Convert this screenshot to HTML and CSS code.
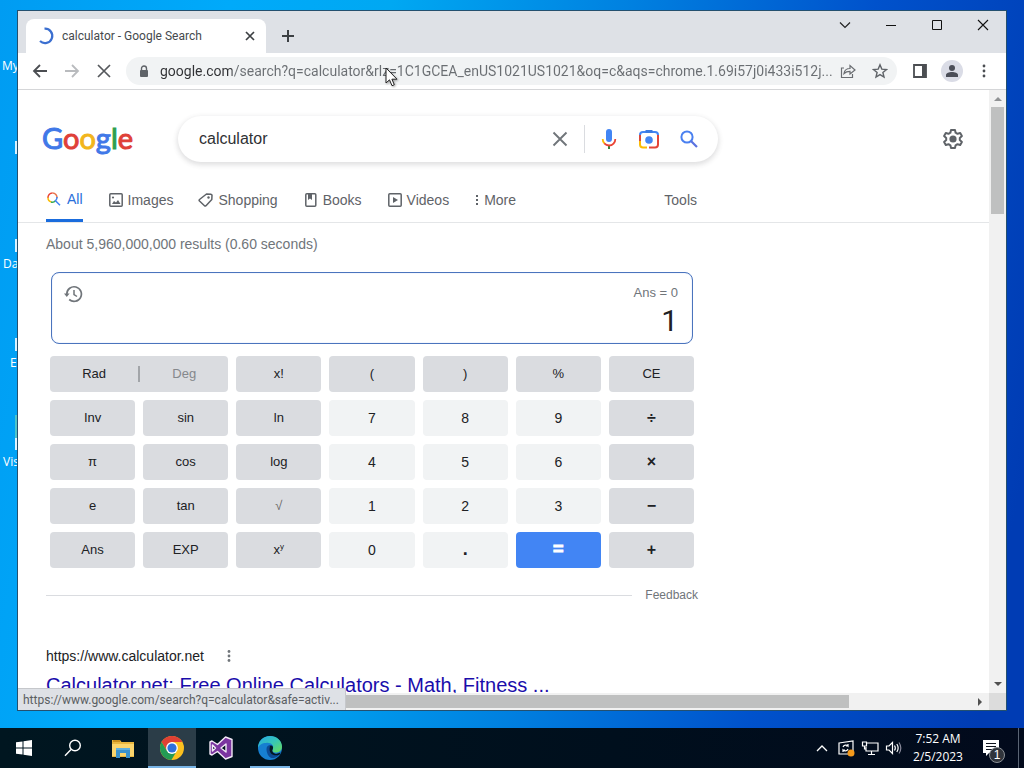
FILE: index.html
```html
<!DOCTYPE html>
<html lang="en">
<head>
<meta charset="utf-8">
<meta name="viewport" content="width=device-width, initial-scale=1">
<title>calculator - Google Search</title>
<link rel="stylesheet" href="styles.css">
</head>
<body>
<div class="desktop">
  <div class="workspace">
    <div class="shortcut shortcut-my"><span class="shortcut-label">My</span></div>
    <div class="shortcut shortcut-plain"><span class="sliver"></span></div>
    <div class="shortcut shortcut-da"><span class="sliver"></span><span class="shortcut-label">Da</span></div>
    <div class="shortcut shortcut-e"><span class="sliver"></span><span class="shortcut-label">E</span></div>
    <div class="shortcut shortcut-vis"><span class="sliver tall"></span><span class="shortcut-label">Vis</span></div>

    <main class="window">
      <header class="tab-strip">
        <div class="tab">
          <svg class="spinner" width="18" height="18" viewBox="0 0 18 18"><path d="M7.500 1.700A7.200 7.200 0 1 1 3 14" fill="none" stroke="#3b6fd0" stroke-width="2.200"/></svg>
          <span class="tab-title">calculator - Google Search</span>
          <button class="icon-button tab-close" aria-label="Close tab"><svg width="10" height="10" viewBox="0 0 10 10"><path d="M1 1l8 8M9 1L1 9" stroke="#3c4043" stroke-width="1.700"/></svg></button>
        </div>
        <button class="icon-button new-tab" aria-label="New tab"><svg width="14" height="14" viewBox="0 0 14 14"><path d="M7 1v12M1 7h12" stroke="#3c4043" stroke-width="2"/></svg></button>
        <div class="window-controls">
          <button class="icon-button" aria-label="Search tabs"><svg width="12" height="12" viewBox="0 0 12 12"><path d="M1 3.500l5 5 5-5" fill="none" stroke="#222" stroke-width="1.200"/></svg></button>
          <button class="icon-button" aria-label="Minimize"><svg width="12" height="12" viewBox="0 0 12 12"><path d="M1 6.500h10" stroke="#111"/></svg></button>
          <button class="icon-button" aria-label="Maximize"><svg width="12" height="12" viewBox="0 0 12 12"><path d="M1.500 1.500h9v9h-9z" fill="none" stroke="#111"/></svg></button>
          <button class="icon-button" aria-label="Close"><svg width="12" height="12" viewBox="0 0 12 12"><path d="M1 1l10 10M11 1L1 11" stroke="#111" stroke-width="1.100"/></svg></button>
        </div>
      </header>

      <nav class="toolbar">
        <button class="icon-button nav-button" aria-label="Back"><svg width="16" height="16" viewBox="0 0 16 16"><path d="M15 8H2M8 2L2 8l6 6" fill="none" stroke="#4b4e52" stroke-width="1.800"/></svg></button>
        <button class="icon-button nav-button" aria-label="Forward"><svg width="16" height="16" viewBox="0 0 16 16"><path d="M1 8h13M8 2l6 6-6 6" fill="none" stroke="#b9bbbe" stroke-width="1.800"/></svg></button>
        <button class="icon-button nav-button" aria-label="Stop"><svg width="14" height="14" viewBox="0 0 14 14"><path d="M1 1l12 12M13 1L1 13" stroke="#55585c" stroke-width="1.700"/></svg></button>
        <div class="omnibox">
          <svg class="lock" width="10" height="13" viewBox="0 0 10 13"><path d="M2.500 6V3.500a2.500 2.500 0 0 1 5 0V6" fill="none" stroke="#5f6368" stroke-width="1.400"/><rect x="1" y="5" width="8" height="7" rx="1" fill="#5f6368"/></svg>
          <input class="address" type="text" aria-label="Address" value="google.com/search?q=calculator&amp;rlz=1C1GCEA_enUS1021US1021&amp;oq=c&amp;aqs=chrome.1.69i57j0i433i512j...">
          <button class="icon-button" aria-label="Share"><svg width="16" height="16" viewBox="0 0 16 16"><path d="M4 5H1.500v9.500h11V11M4 10.500c.5-3.500 2.500-5 6-5V2.500l5 4.500-5 4V8.300c-3 0-4.500.7-6 2.200z" fill="none" stroke="#6a6d71" stroke-width="1.200"/></svg></button>
          <button class="icon-button bookmark" aria-label="Bookmark"><svg width="16" height="16" viewBox="0 0 16 16"><path d="M8 1.800l1.800 4.300 4.700.4-3.600 3 1.100 4.600L8 11.600l-4 2.500 1.100-4.600-3.600-3 4.700-.4z" fill="none" stroke="#5f6368" stroke-width="1.400"/></svg></button>
        </div>
        <div class="toolbar-actions">
          <button class="icon-button" aria-label="Side panel"><svg width="14" height="14" viewBox="0 0 14 14"><path d="M1 1h12v12H1z" fill="none" stroke="#4b4e52" stroke-width="1.800"/><path d="M9 1h4v12H9z" fill="#4b4e52"/></svg></button>
          <button class="icon-button avatar" aria-label="Profile"><svg width="14" height="14" viewBox="0 0 14 14" fill="#4b4e58"><circle cx="7" cy="4" r="3"/><path d="M1 13v-2c0-2 3-3 6-3s6 1 6 3v2z"/></svg></button>
          <button class="icon-button menu" aria-label="Menu"><svg width="4" height="14" viewBox="0 0 4 14" fill="#4b4e52"><circle cx="2" cy="2" r="1.400"/><circle cx="2" cy="7" r="1.400"/><circle cx="2" cy="12" r="1.400"/></svg></button>
        </div>
      </nav>

      <div class="viewport">
        <div class="page">
          <div class="search-row">
            <a class="logo" href="#" aria-label="Google"><span class="blue">G</span><span class="red">o</span><span class="yellow">o</span><span class="blue">g</span><span class="green">l</span><span class="red">e</span></a>
            <form class="search-box">
              <input class="query" type="text" aria-label="Search" value="calculator">
              <button class="icon-button clear" type="button" aria-label="Clear"><svg width="16" height="16" viewBox="0 0 16 16"><path d="M1.500 1.500l13 13M14.500 1.500l-13 13" stroke="#70757a" stroke-width="1.900"/></svg></button>
              <button class="icon-button tool" type="button" aria-label="Search by voice"><svg width="24" height="24" viewBox="0 0 24 24"><rect x="9" y="2" width="6" height="13" rx="3" fill="#4285f4"/><path d="M11 18.500h2V22h-2z" fill="#34853f"/><path d="M12 18.500a6.300 6.300 0 0 0 6.300-6.500" fill="none" stroke="#ea4335" stroke-width="1.800"/><path d="M5.700 12a6 6 0 0 0 2 4.700" fill="none" stroke="#fbbc04" stroke-width="1.800"/><path d="M7.300 16.300a7 7 0 0 0 4.700 2.200" fill="none" stroke="#ea4335" stroke-width="1.800"/></svg></button>
              <button class="icon-button tool" type="button" aria-label="Search by image"><svg width="24" height="24" viewBox="0 0 24 24" fill="none" stroke-width="2"><path d="M3 10V8a3 3 0 0 1 3-3h12a3 3 0 0 1 3 3" stroke="#4285f4"/><path d="M8.500 4.500h7" stroke="#3c7ae0" stroke-width="3"/><path d="M21 8v9.500a3 3 0 0 1-3 3h-6" stroke="#e34538"/><path d="M3 8v6" stroke="#d94a3c"/><path d="M3 14v3.500a3 3 0 0 0 3 3h4" stroke="#fbbc04"/><circle cx="12" cy="13" r="3.800" fill="#4285f4"/></svg></button>
              <button class="icon-button tool" aria-label="Search"><svg width="18" height="18" viewBox="0 0 18 18"><circle cx="7" cy="7" r="5.600" fill="none" stroke="#4a80f0" stroke-width="2"/><path d="M11 11l6 6" stroke="#5a72e0" stroke-width="2.200"/></svg></button>
            </form>
            <button class="icon-button settings" aria-label="Settings"><svg width="24" height="24" viewBox="0 0 24 24"><path d="M10 3h4l.6 2.700 1.900 1.100 2.700-.8 1.700 3-2.100 1.900v2.200l2.100 1.900-1.700 3-2.700-.8-1.900 1.100L14 21h-4l-.6-2.700-1.900-1.100-2.700.8-1.700-3 2.100-1.900v-2.200L3.100 9l1.700-3 2.700.8 1.900-1.100z" fill="none" stroke="#5f6368" stroke-width="2" stroke-linejoin="round"/><circle cx="12" cy="12" r="3.600" fill="#5f6368"/></svg></button>
          </div>

          <nav class="filters">
            <a class="filter active" href="#"><svg width="16" height="16" viewBox="0 0 16 16" fill="none" stroke-width="1.500"><path d="M2 7a4.500 4.500 0 0 1 4.500-5" stroke="#ea4335"/><path d="M6.500 2A4.500 4.500 0 0 1 11 7" stroke="#e8734a"/><path d="M2 6.500A4.500 4.500 0 0 0 5.500 11" stroke="#fbbc04"/><path d="M5 11a4.500 4.500 0 0 0 4.500-1.200" stroke="#34a853"/><path d="M11 6a4.500 4.500 0 0 1-1.500 3.800L14 14.200" stroke="#4285f4"/></svg>All</a>
            <a class="filter" href="#"><svg width="16" height="16" viewBox="0 0 16 16"><rect x="1.800" y="1.800" width="12.400" height="12.400" rx="1" fill="none" stroke="#5f6368" stroke-width="1.500"/><path d="M4 12l2-3 2 1.500L10 8l2.500 4z" fill="#5f6368"/><circle cx="5" cy="5.500" r="1.100" fill="#5f6368"/></svg>Images</a>
            <a class="filter" href="#"><svg width="16" height="16" viewBox="0 0 16 16"><path d="M8.500 2l4.500.2 1 .9-.2 4.400L8 13.700c-.6.500-1 .5-1.500 0L1.500 9c-.5-.5-.5-1 0-1.500z" fill="none" stroke="#5f6368" stroke-width="1.500" stroke-linejoin="round"/><circle cx="10.500" cy="5.500" r="1.200" fill="#5f6368"/></svg>Shopping</a>
            <a class="filter" href="#"><svg width="16" height="16" viewBox="0 0 16 16"><rect x="2.800" y="1.800" width="10" height="12.400" rx="1" fill="none" stroke="#5f6368" stroke-width="1.500"/><path d="M5 2h4v6L7 6.500 5 8z" fill="#5f6368"/></svg>Books</a>
            <a class="filter" href="#"><svg width="16" height="16" viewBox="0 0 16 16"><rect x="1.800" y="1.800" width="12.400" height="12.400" rx="1" fill="none" stroke="#5f6368" stroke-width="1.500"/><path d="M6 5l5 3-5 3z" fill="#5f6368"/></svg>Videos</a>
            <a class="filter" href="#"><svg width="6" height="12" viewBox="0 0 6 12" fill="#5f6368"><path d="M2 1h2v2H2zM2 5h2v2H2zM2 9h2v2H2z"/></svg>More</a>
            <a class="filter tools" href="#">Tools</a>
          </nav>

          <section class="results">
            <p class="stats">About 5,960,000,000 results (0.60 seconds)</p>
            <div class="calculator">
              <div class="display">
                <button class="icon-button history" aria-label="History"><svg width="20" height="20" viewBox="0 0 20 20" fill="none" stroke="#70757a" stroke-width="1.700"><path d="M3.800 10a7.300 7.300 0 1 1 2.400 5.500"/><path d="M1 9.500h5.600L3.800 13z" fill="#70757a" stroke="none"/><path d="M11 6v4.500l3 2" stroke-width="1.500"/></svg></button>
                <div class="readout"><span class="previous">Ans = 0</span><output class="value">1</output></div>
              </div>
              <div class="keys">
                <div class="angle-mode"><button class="mode">Rad</button><span class="mode-divider"></span><button class="mode muted">Deg</button></div>
                <button class="key">x!</button><button class="key">(</button><button class="key">)</button><button class="key">%</button><button class="key">CE</button>
                <button class="key">Inv</button><button class="key">sin</button><button class="key">ln</button><button class="key digit">7</button><button class="key digit">8</button><button class="key digit">9</button><button class="key operator">÷</button>
                <button class="key">π</button><button class="key">cos</button><button class="key">log</button><button class="key digit">4</button><button class="key digit">5</button><button class="key digit">6</button><button class="key operator">×</button>
                <button class="key">e</button><button class="key">tan</button><button class="key root">√</button><button class="key digit">1</button><button class="key digit">2</button><button class="key digit">3</button><button class="key operator">−</button>
                <button class="key">Ans</button><button class="key">EXP</button><button class="key"><span>x<sup>y</sup></span></button><button class="key digit">0</button><button class="key digit point">.</button><button class="key equals">=</button><button class="key operator">+</button>
              </div>
            </div>
            <div class="feedback"><span class="rule"></span><a class="feedback-link" href="#">Feedback</a></div>
            <article class="result">
              <div class="source"><cite class="site">https://www.calculator.net</cite><button class="icon-button" aria-label="About this result"><svg width="4" height="14" viewBox="0 0 4 14" fill="#70757a"><circle cx="2" cy="2.500" r="1.400"/><circle cx="2" cy="7" r="1.400"/><circle cx="2" cy="11.500" r="1.400"/></svg></button></div>
              <h3 class="title"><a href="#">Calculator.net: Free Online Calculators - Math, Fitness ...</a></h3>
            </article>
          </section>
        </div>
        <div class="scroll-y"><svg width="8" height="4" viewBox="0 0 8 4"><path d="M0 4l4-4 4 4z" fill="#909294"/></svg><span class="thumb-y"></span><svg width="8" height="4" viewBox="0 0 8 4"><path d="M0 0l4 4 4-4z" fill="#505050"/></svg></div>
        <div class="scroll-x"><span class="thumb-x"></span><svg width="4" height="8" viewBox="0 0 4 8"><path d="M0 0l4 4-4 4z" fill="#505050"/></svg></div>
        <div class="corner"></div>
        <div class="status">https://www.google.com/search?q=calculator&amp;safe=activ...</div>
      </div>
    </main>
    <svg class="pointer" width="14" height="21" viewBox="0 0 14 21"><path d="M1 1v15l3.500-3.200L7 18.700l2.300-1-2.400-5.500H12z" fill="#fff" stroke="#222" stroke-linejoin="round"/></svg>
  </div>

  <footer class="taskbar">
    <button class="task" aria-label="Start"><svg width="16" height="16" viewBox="0 0 16 16" fill="#fff"><path d="M0 2.300l6.500-.9v6.100H0zM7.500 1.200L16 0v7.500H7.500zM0 8.500h6.500v6.100L0 13.700zM7.500 8.500H16V16l-8.500-1.200z"/></svg></button>
    <button class="task search-task" aria-label="Search"><svg width="18" height="18" viewBox="0 0 18 18" fill="none" stroke="#fff" stroke-width="1.400"><circle cx="11" cy="6.500" r="5.300"/><path d="M7 10.500L1 16.800"/></svg></button>
    <button class="task" aria-label="File Explorer"><svg width="22" height="20" viewBox="0 0 22 20"><path d="M0 2h8l1.500 2H22v15H0z" fill="#e9b73f"/><path d="M1 2h7v2H1z" fill="#c98f1d"/><path d="M0 6h22v12H0z" fill="#fbd56c"/><path d="M4 10h14v10h-4v-5H8v5H4z" fill="#3b92cc"/><path d="M4 10h14v2H4z" fill="#5fb0e0"/></svg></button>
    <button class="task current" aria-label="Google Chrome"><svg width="24" height="24" viewBox="0 0 24 24"><circle cx="12" cy="12" r="12" fill="#fbc01f"/><path d="M1.600 6A12 12 0 0 1 22.400 6H12L7 15z" fill="#df4034"/><path d="M1.600 6a12 12 0 0 0 9.800 18l5.500-9.200L7 15z" fill="#239b54"/><circle cx="12" cy="12" r="5.900" fill="#fff"/><circle cx="12" cy="12" r="4.600" fill="#2d70dd"/></svg></button>
    <button class="task" aria-label="Visual Studio"><svg width="24" height="24" viewBox="0 0 24 24"><path d="M16.500 1L23 3.500v17L16.500 23l-8-7.500L3 19l-2-1V6l2-1 5.500 3.500zM3.500 9v6L6.500 12zM17 8l-5 4 5 4z" fill="#7b35a0" fill-rule="evenodd" stroke="#f3eaf7" stroke-width="1.400" stroke-linejoin="round"/></svg></button>
    <button class="task running" aria-label="Microsoft Edge"><svg width="24" height="24" viewBox="0 0 24 24"><defs><linearGradient id="edge-top" x1="0" y1="0" x2="1" y2="1"><stop offset="0" stop-color="#26a8e6"/><stop offset=".5" stop-color="#36c5b8"/><stop offset="1" stop-color="#6bdc55"/></linearGradient></defs><circle cx="12" cy="12" r="12" fill="#167fd1"/><path d="M0 12C0 5 5 0 12 0s12 5 12 10.500c0 4-3 6-6.500 6-3 0-4-1.500-3-3C17 9 12 6 8 7c-4 0-7 2-8 5z" fill="url(#edge-top)"/><path d="M8.500 13c0-3 2-4 4-4 3 0 3 3 2 4.500-1 2 1 4 4 4 2 0 3-.5 4-1-2 4.500-6 6-9 5.500-3-1-5-5-5-9z" fill="#0c4a94"/><path d="M12 10c2-1 4 1 2.500 3.500-1 2 1 4.500 4 4.500l4-1.500-.8 2c-4 2-12 1-9.700-8.500z" fill="#031722"/></svg></button>
    <div class="tray">
      <button class="tray-button" aria-label="Show hidden icons"><svg width="12" height="8" viewBox="0 0 12 8"><path d="M1 7l5-5 5 5" fill="none" stroke="#fff" stroke-width="1.300"/></svg></button>
      <button class="tray-button" aria-label="Update"><svg width="18" height="18" viewBox="0 0 18 18" fill="none" stroke="#fff" stroke-width="1.200"><path d="M2 4l14-2v13H2z"/><path d="M6 8a3 3 0 0 1 5-1V5M11 7H9M11 10a3 3 0 0 1-5 1v2M6 11h2"/><circle cx="14" cy="14" r="3.500" fill="#f59a1b" stroke="none"/></svg></button>
      <button class="tray-button" aria-label="Network"><svg width="18" height="16" viewBox="0 0 18 16" fill="none" stroke="#fff" stroke-width="1.200"><path d="M6 3h11v8H5V7M10.500 11v3.500M7 14.500h7M1.500 2h4v4h-4zM3.500 6v3H5"/></svg></button>
      <button class="tray-button" aria-label="Volume"><svg width="18" height="16" viewBox="0 0 18 16" fill="none" stroke="#fff" stroke-width="1.200"><path d="M1.500 6v4H4l3.500 3.500v-11L4 6z"/><path d="M9.500 5.500c1 1.500 1 3.500 0 5M11.800 4c1.700 2.500 1.700 5.500 0 8"/><path d="M14 2.500c2.300 3.500 2.300 7.500 0 11" stroke="#889"/></svg></button>
      <time class="clock" datetime="2023-02-05T07:52"><span>7:52 AM</span><span>2/5/2023</span></time>
      <button class="notifications" aria-label="Notifications"><svg width="18" height="18" viewBox="0 0 18 18"><path d="M1 1h16v13H7l-3 3v-3H1z" fill="#fff"/><path d="M4 4.500h10M4 7.500h10M4 10.500h6" stroke="#10151f" stroke-width="1.200"/></svg><span class="badge">1</span></button>
      <span class="show-desktop"></span>
    </div>
  </footer>
</div>
</body>
</html>
```
FILE: styles.css
```css
* { box-sizing: border-box; }
body { margin: 0; font-family: "Liberation Sans", Arial, sans-serif; color: #202124; }
svg { display: block; flex: none; }
button { font: inherit; color: inherit; border: 0; padding: 0; margin: 0; background: none; }
input { font: inherit; border: 0; padding: 0; outline: 0; background: none; min-width: 0; }
a { color: inherit; text-decoration: none; }
.icon-button { display: flex; align-items: center; justify-content: center; flex: none; }

.desktop { display: flex; flex-direction: column; height: 100vh; overflow: hidden; }
.workspace { position: relative; flex: 1; min-height: 0; background: linear-gradient(100deg, #009cf2 0%, #00aafa 20%, #00a8f2 34%, #0080e0 55%, #0052cc 76%, #003cb4 96%); }

/* Desktop shortcuts, mostly covered by the browser window */
.shortcut { position: absolute; left: 0; width: 28px; display: flex; flex-direction: column; gap: 4px; color: #fff; font: 12px/16px "Open Sans", sans-serif; }
.shortcut-my { top: 58px; left: -1px; }
.shortcut-plain { top: 141px; }
.shortcut-da { top: 239px; }
.shortcut-e { top: 338px; }
.shortcut-vis { top: 415px; }
.sliver { width: 3px; height: 13px; margin-left: 15px; background: #d8f2ff; }
.sliver.tall { height: 35px; background: linear-gradient(#4fc4c8 65%, #e0f4ff 65%); }
.shortcut-label { padding-left: 3px; }
.shortcut-e .shortcut-label { padding-left: 10px; }

.window { position: absolute; inset: 10px 17px 17px; display: flex; flex-direction: column; border: 1px solid #24506f; background: #fff; }

.tab-strip { display: flex; align-items: flex-end; height: 42px; padding-left: 8px; background: #dee1e6; flex: none; }
.tab { display: flex; align-items: center; width: 240px; height: 34px; padding: 0 10px 0 11px; gap: 7px; background: #fff; border-radius: 8px 8px 0 0; }
.tab-title { flex: 1; font: 12px/18px Roboto, sans-serif; color: #45494d; white-space: nowrap; }
.tab-close { width: 12px; height: 16px; }
.new-tab { width: 28px; height: 34px; margin-left: 8px; }
.window-controls { display: flex; align-self: flex-start; margin-left: auto; }
.window-controls .icon-button { width: 46px; height: 28px; }

.toolbar { display: flex; align-items: center; height: 37px; padding: 0 15px 0 6px; border-bottom: 1px solid #d5d6d8; flex: none; }
.nav-button { width: 32px; height: 28px; }
.omnibox { display: flex; align-items: center; flex: 1; min-width: 0; height: 28px; margin-left: 6px; padding: 0 9px 0 13px; border-radius: 14px; background: #f1f3f4; gap: 8px; }
.lock { margin-right: 3px; }
.bookmark { margin-left: 8px; }
.address { flex: 1; font: 14px/20px Roboto, sans-serif; color: transparent; background: linear-gradient(90deg, #303134 72px, #6a6e72 72px); -webkit-background-clip: text; background-clip: text; }
.toolbar-actions { display: flex; align-items: center; gap: 20px; margin-left: 16px; }
.avatar { width: 22px; height: 22px; border-radius: 50%; background: #dadce6; margin: 0 -6px; }
.menu { width: 14px; }

.viewport { position: relative; flex: 1; min-height: 0; display: grid; grid-template: minmax(0, 1fr) 17px / minmax(0, 1fr) 17px; }
.page { overflow: hidden; }
.search-row { display: flex; align-items: center; padding: 26px 24px 0; height: 72px; }
.logo { width: 92px; margin-right: 44px; padding-bottom: 2px; font: 29px/44px Lato, sans-serif; -webkit-text-stroke: 1px currentColor; white-space: nowrap; }
.blue { color: #4078e8; }
.red { color: #df4038; }
.yellow { color: #f2b51c; }
.green { color: #2f9e50; }
.search-box { display: flex; align-items: center; width: 540px; height: 46px; padding: 0 9px 0 21px; border-radius: 23px; background: #fff; box-shadow: 0 2px 5px 1px rgba(64, 60, 67, .16); }
.query { flex: 1; font-size: 16px; line-height: 22px; color: #303134; }
.clear { width: 33px; height: 28px; padding-right: 17px; border-right: 1px solid #dadce0; }
.clear + .tool { margin-left: 4px; }
.tool { width: 40px; height: 40px; }
.settings { margin-left: auto; }

.filters { display: flex; gap: 25px; height: 61px; padding: 17px 292px 0 28px; border-bottom: 1px solid #e4e6e8; font-size: 14px; color: #5f6368; }
.filter { display: flex; align-items: center; gap: 4px; height: 43px; padding-bottom: 2px; white-space: nowrap; }
.filter.active { gap: 5px; color: #2a6fdb; padding-bottom: 0; border-bottom: 3px solid #1a6cdd; }
.tools { margin-left: auto; }

.results { width: 652px; margin-left: 28px; }
.stats { margin: 0; padding: 11px 0 19px; font-size: 14px; line-height: 20px; color: #70757a; }
.calculator { padding: 0 4px; }
.display { display: flex; justify-content: space-between; align-items: flex-start; height: 72px; margin: -1px 1px 12px; padding: 11px 14px 0 11px; border: 1px solid #4b74bd; border-radius: 8px; box-shadow: inset 0 0 1px #8ab0f0; }
.readout { display: flex; flex-direction: column; align-items: flex-end; }
.previous { font-size: 13px; line-height: 18px; color: #70757a; }
.value { font: 30px/38px Roboto, sans-serif; }
.keys { display: grid; grid-template-columns: repeat(7, minmax(0, 1fr)); gap: 8px; font-size: 13px; }
.key, .angle-mode { height: 36px; padding-bottom: 1px; border-radius: 4px; background: #dadce0; }
.angle-mode { grid-column: span 2; display: flex; align-items: center; }
.mode { flex: 1; height: 100%; }
.mode-divider { width: 2px; height: 16px; background: #a2a5a9; }
.muted { color: #85888c; }
.key.digit { background: #f1f3f4; font-size: 14px; }
.key.operator { font-size: 16px; font-weight: bold; }
.key.equals { background: #4285f4; color: #fff; font-size: 18px; font-weight: bold; -webkit-text-stroke: 1px currentColor; }
.key.point { font-size: 18px; font-weight: bold; }
.key.root { color: #666; }
.key sup { font-size: 8px; line-height: 0; }
.feedback { display: flex; align-items: center; gap: 13px; padding-top: 18px; font-size: 12px; line-height: 18px; color: #70757a; }
.rule { flex: 1; height: 1px; background: #dadce0; }
.result { padding-top: 41px; }
.source { display: flex; align-items: center; gap: 23px; font-size: 14px; line-height: 22px; }
.site { font-style: normal; }
.title { margin: 5px 0 0; font-size: 20px; line-height: 26px; font-weight: 400; color: #1a0dab; white-space: nowrap; }

.scroll-y { display: flex; flex-direction: column; align-items: center; padding: 7px 0; background: #f1f1f1; }
.thumb-y { width: 13px; height: 107px; margin: 6px 0 auto; background: #bfc0c0; }
.scroll-x { display: flex; align-items: center; justify-content: space-between; padding: 0 7px 0 17px; background: #f1f1f1; }
.thumb-x { width: 86%; height: 13px; background: #bfc0c0; }
.corner { background: #dcdcdc; }
.status { position: absolute; left: 0; bottom: 0; width: 328px; height: 22px; padding: 2px 5px; border: 1px solid #c5c7cb; border-width: 1px 1px 0 0; background: #dee1e6; font: 12px/18px Roboto, sans-serif; color: #5a5e62; white-space: nowrap; overflow: hidden; }
.pointer { position: absolute; left: 385px; top: 67px; filter: drop-shadow(1px 1px 1px rgba(0, 0, 0, .35)); }

.taskbar { display: flex; gap: 1px; height: 40px; flex: none; background: linear-gradient(90deg, #001620, #000f1d 60%, #020a1c); color: #fff; }
.task { display: flex; align-items: center; justify-content: center; width: 48px; border: 0 solid transparent; border-width: 2px 0; }
.search-task { margin-right: 1px; }
.task.current { background: #2b3d48; border-bottom-color: #78b4e6; }
.task.running { background: linear-gradient(#78b4e6, #78b4e6) center bottom / 40px 2px no-repeat border-box; }
.tray { display: flex; align-items: center; margin-left: auto; }
.tray-button { display: flex; align-items: center; justify-content: center; width: 24px; height: 40px; }
.clock { display: flex; flex-direction: column; align-items: center; width: 54px; margin-left: 5px; font: 12px/18px "Open Sans", sans-serif; }
.notifications { position: relative; display: flex; align-items: center; justify-content: center; width: 52px; height: 40px; }
.badge { position: absolute; left: 24px; top: 19px; width: 16px; height: 16px; border: 1px solid #8c9197; border-radius: 50%; background: #30343b; font-size: 12px; line-height: 14px; text-align: center; }
.show-desktop { width: 6px; height: 40px; margin-left: 1px; border-left: 1px solid #5a6474; }
```
